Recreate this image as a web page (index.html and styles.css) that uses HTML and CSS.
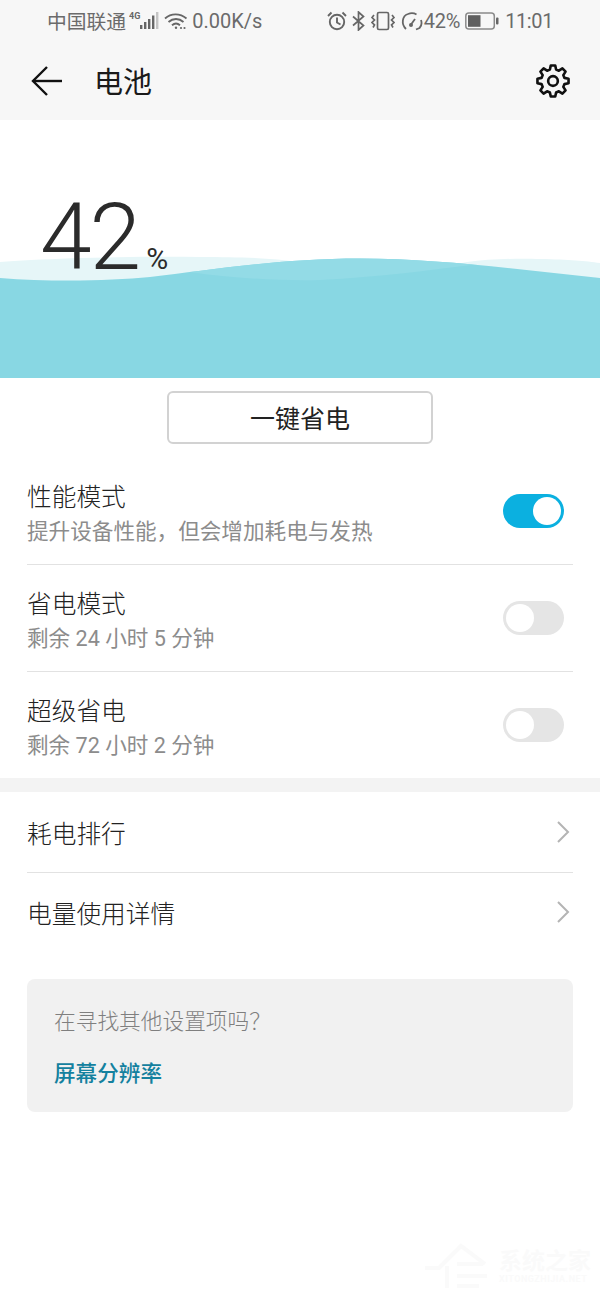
FILE: index.html
```html
<!DOCTYPE html>
<html lang="zh-CN">
<head>
	<meta charset="UTF-8">
	<meta name="viewport" content="width=device-width, initial-scale=1.0">
	<title>电池</title>
	<link rel="stylesheet" href="styles.css">
</head>
<body>
	<div id="top">
		<div id="status">
			<div class="status-side">
				<span class="carrier">中国联通</span>
				<svg class="sig" width="31" height="18" viewBox="0 0 31 18">
					<text x="0" y="7" class="sig-label">4G</text>
					<rect x="11" y="13" width="2.400" height="4" fill="#666"/>
					<rect x="15" y="10" width="2.400" height="7" fill="#666"/>
					<rect x="19" y="7" width="2.400" height="10" fill="#666"/>
					<rect x="23" y="3.500" width="2.400" height="13.500" fill="#666"/>
					<rect x="27" y="0" width="2.400" height="17" fill="#c4c4c4"/>
				</svg>
				<svg class="wifi" width="24" height="18" viewBox="0 0 24 18" fill="none" stroke="#666" stroke-width="1.800">
					<path d="M1 6.500C7 1 16 1 22.500 6.500"/>
					<path d="M4.500 10C9 6 15 6 19.500 10"/>
					<path d="M8 13.200C10.500 11 13.500 11 16 13.200"/>
					<circle cx="12" cy="15.800" r="1.200" fill="#666" stroke="none"/>
					<circle cx="17" cy="16" r="1.100" fill="#666" stroke="none"/>
					<circle cx="20.500" cy="16" r="1.100" fill="#666" stroke="none"/>
				</svg>
				<span class="speed">0.00K/s</span>
			</div>
			<div class="status-side">
				<svg width="20" height="20" viewBox="0 0 20 20" fill="none" stroke="#666" stroke-width="1.900">
					<circle cx="10" cy="11" r="7.200"/>
					<path d="M10 6.500V11.500L13.500 13.500"/>
					<path d="M1 5L4.500 1.500M19 5L15.500 1.500"/>
				</svg>
				<svg class="gap-bt" width="13" height="20" viewBox="0 0 13 20" fill="none" stroke="#666" stroke-width="1.700">
					<path d="M1 5.500L11.500 14.500L6.500 19V1L11.500 5.500L1 14.500"/>
				</svg>
				<svg class="gap-vib" width="24" height="20" viewBox="0 0 24 20" fill="none" stroke="#666" stroke-width="1.700">
					<rect x="6.500" y="1.500" width="11" height="17" rx="1.500"/>
					<path d="M3 4L1 6.500L3.500 9L1 11.500L3.500 14L2 16.500"/>
					<path d="M21 4L23 6.500L20.500 9L23 11.500L20.500 14L22 16.500"/>
				</svg>
				<svg class="gap-gauge" width="22" height="20" viewBox="0 0 22 20" fill="none" stroke="#666" stroke-width="1.800">
					<path d="M5 18C0 13 1 5 7 3C10 1.800 13 2 15.500 3.500"/>
					<path d="M14 8L10 13.500"/>
					<path d="M20 9C21 12 20.500 15 18.500 17L15 18.500"/>
					<circle cx="10" cy="14" r="2" fill="#666" stroke="none"/>
				</svg>
				<span class="batt-num">42%</span>
				<svg class="gap-batt" width="34" height="18" viewBox="0 0 34 18">
					<rect x="0.800" y="1" width="28.500" height="16" rx="3" fill="none" stroke="#8b8b8b" stroke-width="1.500"/>
					<rect x="3" y="3.200" width="12.500" height="11.600" fill="#5f5f5f"/>
					<rect x="31" y="5.500" width="2.500" height="7" rx="1" fill="#666"/>
				</svg>
				<span class="time">11:01</span>
			</div>
		</div>
		<div id="toolbar">
			<div class="toolbar-left">
				<svg width="31" height="30" viewBox="0 0 31 30" fill="none" stroke="#111" stroke-width="2.400">
					<path d="M16 1L2 15L16 29"/>
					<path d="M2 15H31"/>
				</svg>
				<div class="page-title">电池</div>
			</div>
			<svg width="34" height="34" viewBox="-17.500 -17.500 35 35" fill="none" stroke="#111" stroke-width="2.700" stroke-linejoin="round">
				<path d="M-3.200 -11.800L-2.300 -16L2.300 -16L3.200 -11.800L6.080 -10.610L9.690 -12.940L12.940 -9.690L10.610 -6.080L11.800 -3.200L16 -2.300L16 2.300L11.800 3.200L10.610 6.080L12.940 9.690L9.690 12.940L6.080 10.610L3.200 11.800L2.300 16L-2.300 16L-3.200 11.800L-6.080 10.610L-9.690 12.940L-12.940 9.690L-10.610 6.080L-11.800 3.200L-16 2.300L-16 -2.300L-11.800 -3.200L-10.610 -6.080L-12.940 -9.690L-9.690 -12.940L-6.080 -10.610Z"/>
				<circle cx="0" cy="0" r="5"/>
			</svg>
		</div>
	</div>

	<div id="hero">
		<svg class="wave" width="600" height="258" viewBox="0 120 600 258">
			<defs>
				<clipPath id="surface">
					<path d="M0 278C50 282 110 281 150 277C210 270 280 258.500 360 258.500C440 258.500 520 270 600 278V378H0Z"/>
				</clipPath>
			</defs>
			<path d="M0 262C40 259 120 256 200 257C240 257 270 258 300 262L400 275L467 262C490 259 520 258 540 259C570 259.500 585 261 600 263V378H0Z" fill="#e6f6f8"/>
			<path d="M0 278C50 282 110 281 150 277C210 270 280 258.500 360 258.500C440 258.500 520 270 600 278V378H0Z" fill="#88d7e3"/>
			<path d="M190 255H480V264C430 270 380 277 320 280C280 281 230 278 190 272Z" fill="#93dbe6" clip-path="url(#surface)"/>
		</svg>
		<div class="level"><span class="level-num">42</span><span class="level-pct">%</span></div>
	</div>

	<div class="save-wrap">
		<div class="save-btn">一键省电</div>
	</div>

	<div class="group">
		<div class="row">
			<div class="row-text">
				<div class="row-title">性能模式</div>
				<div class="row-sub">提升设备性能，但会增加耗电与发热</div>
			</div>
			<div class="toggle on"><div class="knob"></div></div>
		</div>
		<div class="row">
			<div class="row-text">
				<div class="row-title">省电模式</div>
				<div class="row-sub">剩余 24 小时 5 分钟</div>
			</div>
			<div class="toggle"><div class="knob"></div></div>
		</div>
		<div class="row">
			<div class="row-text">
				<div class="row-title">超级省电</div>
				<div class="row-sub">剩余 72 小时 2 分钟</div>
			</div>
			<div class="toggle"><div class="knob"></div></div>
		</div>
	</div>

	<div class="band"></div>

	<div class="group">
		<div class="nav-row">
			<div class="row-title">耗电排行</div>
			<svg width="14" height="22" viewBox="0 0 14 22" fill="none" stroke="#b4b4b4" stroke-width="2"><path d="M2 1L12 11L2 21"/></svg>
		</div>
		<div class="nav-row">
			<div class="row-title">电量使用详情</div>
			<svg width="14" height="22" viewBox="0 0 14 22" fill="none" stroke="#b4b4b4" stroke-width="2"><path d="M2 1L12 11L2 21"/></svg>
		</div>
	</div>

	<div class="hint">
		<div class="hint-text">在寻找其他设置项吗？</div>
		<div class="hint-link">屏幕分辨率</div>
	</div>

	<div class="mark">
		<svg width="66" height="50" viewBox="0 0 66 50" fill="none" stroke="#fafafa" stroke-width="4">
			<path d="M0 28H14L36 6L60 24"/>
			<path d="M22 26V48M32 24H58M32 36H62M32 46H54"/>
		</svg>
		<div>
			<div class="mark-name">系统之家</div>
			<div class="mark-url">XITONGZHIJIA.NET</div>
		</div>
	</div>
</body>
</html>
```

FILE: styles.css
```css
:root{
	--cjk: "Noto Sans CJK SC", sans-serif;
	--latin: Roboto, "Noto Sans CJK SC", sans-serif;
}

html, body{
	height: 100%;
}

body{
	margin: 0;
	background: #fff;
	font-family: var(--latin);
	color: #222;
	position: relative;
	overflow: hidden;
}

#top{
	background: #f7f7f7;
	height: 120px;
}

#status{
	height: 42px;
	padding: 0 47px;
	display: flex;
	justify-content: space-between;
	align-items: center;
	color: #6b6b6b;
	font-size: 20px;
}

.status-side{
	display: flex;
	align-items: center;
}

.carrier{
	font-family: var(--cjk);
	font-size: 19.800px;
	line-height: 24px;
}

.sig{
	margin-left: 3px;
}

.sig-label{
	font-family: Roboto, sans-serif;
	font-size: 9px;
	font-weight: 700;
	fill: #666;
}

.wifi{
	margin-left: 4px;
}

.speed{
	margin-left: 4px;
}

.gap-bt{
	margin-left: 5px;
}

.gap-vib{
	margin-left: 6px;
}

.gap-gauge{
	margin-left: 6px;
}

.batt-num{
	margin-left: 1px;
	letter-spacing: -0.200px;
}

.gap-batt{
	margin-left: 5px;
}

.time{
	margin-left: 6px;
	letter-spacing: -0.400px;
}

#toolbar{
	height: 78px;
	padding: 0 30px 0 31px;
	display: flex;
	justify-content: space-between;
	align-items: center;
}

.toolbar-left{
	display: flex;
	align-items: center;
	gap: 32px;
}

.page-title{
	font-family: var(--cjk);
	font-size: 29px;
	line-height: 36px;
	padding-bottom: 2px;
	color: #1a1a1a;
}

#hero{
	position: relative;
	height: 258px;
	box-sizing: border-box;
	padding: 64px 0 0 40px;
}

.wave{
	position: absolute;
	left: 0;
	top: 0;
	display: block;
}

.level{
	position: relative;
	display: flex;
	align-items: baseline;
	color: #2b2b2b;
}

.level-num{
	font-size: 93px;
	line-height: 108px;
	font-weight: 300;
	letter-spacing: -2px;
}

.level-pct{
	font-size: 30px;
	font-weight: 400;
	margin-left: 7px;
}

.save-wrap{
	display: flex;
	justify-content: center;
	padding-top: 13px;
}

.save-btn{
	width: 266px;
	height: 53px;
	box-sizing: border-box;
	border: 2px solid #d2d2d2;
	border-radius: 6px;
	padding-bottom: 2px;
	display: flex;
	justify-content: center;
	align-items: center;
	font-family: var(--cjk);
	font-size: 25px;
	color: #222;
}

.group{
	margin-top: 14px;
	padding: 0 27px 0 27px;
}

.band + .group{
	margin-top: 0;
}

.row{
	height: 107px;
	box-sizing: border-box;
	display: flex;
	justify-content: space-between;
	align-items: center;
	border-bottom: 1px solid #e2e2e2;
	padding-right: 9px;
}

.row:last-child{
	height: 106px;
	border-bottom: none;
}

.row-text{
	display: flex;
	flex-direction: column;
	gap: 5px;
	padding-top: 4px;
}

.row-title{
	font-family: var(--cjk);
	font-size: 24.700px;
	line-height: 32px;
	font-weight: 300;
	color: #222;
}

.row-sub{
	font-family: var(--latin);
	font-size: 21.600px;
	line-height: 32px;
	color: #8c8c8c;
}

.toggle{
	width: 61px;
	height: 34px;
	box-sizing: border-box;
	padding: 3px;
	border-radius: 17px;
	background: #e5e5e5;
	display: flex;
}

.toggle.on{
	background: #0bb0e0;
	justify-content: flex-end;
}

.knob{
	width: 28px;
	height: 28px;
	border-radius: 50%;
	background: #fff;
}

.band{
	height: 14px;
	background: #f3f3f3;
}

.nav-row{
	height: 81px;
	box-sizing: border-box;
	display: flex;
	justify-content: space-between;
	align-items: center;
	border-bottom: 1px solid #e2e2e2;
	padding-right: 3px;
}

.nav-row:last-child{
	height: 78px;
	border-bottom: none;
}

.hint{
	margin: 28px 27px 0;
	height: 133px;
	box-sizing: border-box;
	padding: 25px 27px 0;
	border-radius: 8px;
	background: #f1f1f1;
	font-family: var(--cjk);
}

.hint-text{
	font-size: 21.700px;
	line-height: 32px;
	font-weight: 300;
	color: #7f7f7f;
}

.hint-link{
	margin-top: 20px;
	font-size: 21.600px;
	line-height: 32px;
	font-weight: 500;
	color: #14819f;
}

.mark{
	position: absolute;
	left: 425px;
	top: 1240px;
	display: flex;
	align-items: center;
	gap: 8px;
	color: #fafafa;
}

.mark-name{
	font-family: var(--cjk);
	font-size: 23px;
	line-height: 28px;
	font-weight: 700;
}

.mark-url{
	font-family: Roboto, sans-serif;
	font-size: 9px;
	line-height: 12px;
	font-weight: 700;
	letter-spacing: 0.500px;
}
```
